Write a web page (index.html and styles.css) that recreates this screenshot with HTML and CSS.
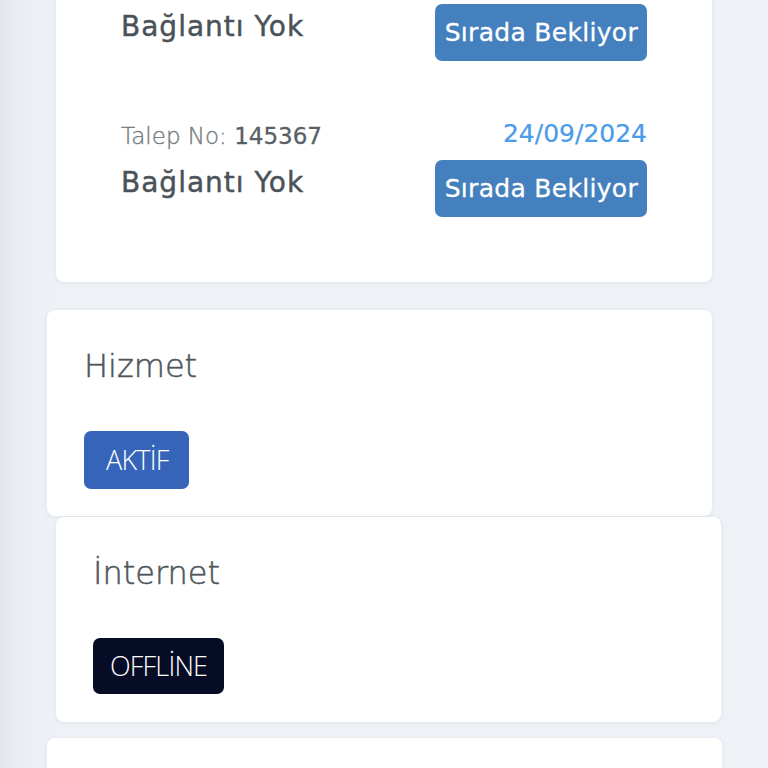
FILE: index.html
```html
<!DOCTYPE html>
<html lang="tr">
<head>
<meta charset="utf-8">
<title>Durum</title>
<link rel="stylesheet" href="styles.css">
</head>
<body>
<div class="page">
  <section class="card card-requests">
    <div class="request">
      <div class="req-left">
        <div class="talep"><span class="talep-label">Talep No: </span><span class="talep-no">145366</span></div>
        <div class="req-title">Bağlantı Yok</div>
      </div>
      <div class="req-right">
        <div class="req-date">24/09/2024</div>
        <div class="req-status">Sırada Bekliyor</div>
      </div>
    </div>
    <div class="request">
      <div class="req-left">
        <div class="talep"><span class="talep-label">Talep No: </span><span class="talep-no">145367</span></div>
        <div class="req-title">Bağlantı Yok</div>
      </div>
      <div class="req-right">
        <div class="req-date">24/09/2024</div>
        <div class="req-status">Sırada Bekliyor</div>
      </div>
    </div>
  </section>

  <section class="card card-status card-hizmet">
    <div class="status-title">Hizmet</div>
    <div class="badge badge-active">AKTİF</div>
  </section>

  <section class="card card-status card-internet">
    <div class="status-title">İnternet</div>
    <div class="badge badge-offline">OFFLİNE</div>
  </section>

  <section class="card card-next"></section>
</div>
</body>
</html>
```

FILE: styles.css
```css
html, body {
  margin: 0;
  padding: 0;
}
body {
  width: 768px;
  height: 768px;
  overflow: hidden;
  background: linear-gradient(to right, #e3e7eb 0, #e9edf1 18px, #edf1f5 40px, #eef2f6 60px, #eef2f6 100%);
  font-family: "DejaVu Sans", "Liberation Sans", sans-serif;
}
.page {
  display: flex;
  flex-direction: column;
  align-items: flex-start;
}
.card {
  background: #ffffff;
  border-radius: 8px;
  box-shadow: 0 1px 5px rgba(40, 60, 80, 0.08);
  box-sizing: border-box;
}
.card-requests {
  margin-top: -64px;
  margin-left: 56px;
  width: 656px;
  padding: 26px 65px 65px 65px;
  display: flex;
  flex-direction: column;
  gap: 57px;
}
.request {
  display: flex;
  justify-content: space-between;
  align-items: flex-start;
}
.req-left {
  display: flex;
  flex-direction: column;
}
.talep {
  font-size: 23px;
  line-height: 36px;
  white-space: nowrap;
}
.talep-label {
  font-weight: 300;
  color: #767c81;
  -webkit-text-stroke: 0.35px #767c81;
}
.talep-no {
  color: #585f65;
  -webkit-text-stroke: 0.3px #585f65;
}
.req-title {
  margin-top: 11px;
  font-size: 28px;
  line-height: 36px;
  letter-spacing: 1px;
  color: #4a5259;
  -webkit-text-stroke: 0.45px #4a5259;
  white-space: nowrap;
}
.req-right {
  display: flex;
  flex-direction: column;
  align-items: flex-end;
}
.req-date {
  font-size: 25px;
  line-height: 32px;
  color: #4a9be8;
  -webkit-text-stroke: 0.2px #4a9be8;
}
.req-status {
  margin-top: 10px;
  height: 57px;
  line-height: 57px;
  padding: 0 9px 0 10px;
  font-size: 25px;
  letter-spacing: 0.3px;
  color: #ffffff;
  -webkit-text-stroke: 0.3px #ffffff;
  background: #4580be;
  border-radius: 7px;
  white-space: nowrap;
}
.card-status {
  width: 665px;
  padding: 36px 37px 27px 37px;
  display: flex;
  flex-direction: column;
  align-items: flex-start;
}
.card-hizmet {
  margin-top: 28px;
  margin-left: 47px;
}
.card-internet {
  margin-top: 1px;
  margin-left: 56px;
  padding-bottom: 28px;
}
.status-title {
  font-size: 32px;
  font-weight: 300;
  line-height: 40px;
  color: #4d565c;
  -webkit-text-stroke: 0.5px #4d565c;
}
.badge {
  margin-top: 45px;
  font-family: "Open Sans", "Liberation Sans", sans-serif;
  font-weight: 300;
  font-size: 27px;
  letter-spacing: -0.8px;
  color: #ffffff;
  border-radius: 7px;
}
.badge-active {
  height: 58px;
  line-height: 58px;
  padding: 0 21px 0 22px;
  background: #3564b9;
}
.badge-offline {
  height: 56px;
  line-height: 56px;
  padding: 0 17px 0 17px;
  background: #060b26;
}
.card-next {
  margin-top: 16px;
  margin-left: 47px;
  width: 675px;
  height: 120px;
}
```
